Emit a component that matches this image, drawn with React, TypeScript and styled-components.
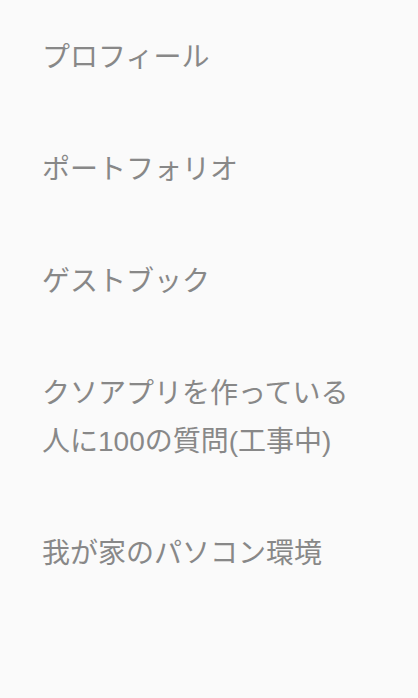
import React from 'react';
import styled, { createGlobalStyle } from 'styled-components';

const GlobalStyle = createGlobalStyle`
  html, body {
    margin: 0;
    padding: 0;
    background-color: #fafafa;
  }

  body {
    font-family: "Liberation Sans", "Noto Sans CJK JP", sans-serif;
  }
`;

const Page = styled.div`
  width: 418px;
  min-height: 698px;
  background-color: #fafafa;
`;

const Menu = styled.ul`
  list-style: none;
  margin: 0;
  padding: 0;
`;

const MenuItem = styled.li`
  padding: 34px 56px 30px 42px;
`;

const MenuLink = styled.a`
  display: block;
  color: #888888;
  font-size: 28px;
  line-height: 48px;
  text-decoration: none;
  cursor: pointer;
`;

const items = [
  'プロフィール',
  'ポートフォリオ',
  'ゲストブック',
  'クソアプリを作っている人に100の質問(工事中)',
  '我が家のパソコン環境',
];

const App: React.FC = () => {
  return (
    <Page>
      <GlobalStyle />
      <Menu>
        {items.map((label) => (
          <MenuItem key={label}>
            <MenuLink>{label}</MenuLink>
          </MenuItem>
        ))}
      </Menu>
    </Page>
  );
};

export default App;
